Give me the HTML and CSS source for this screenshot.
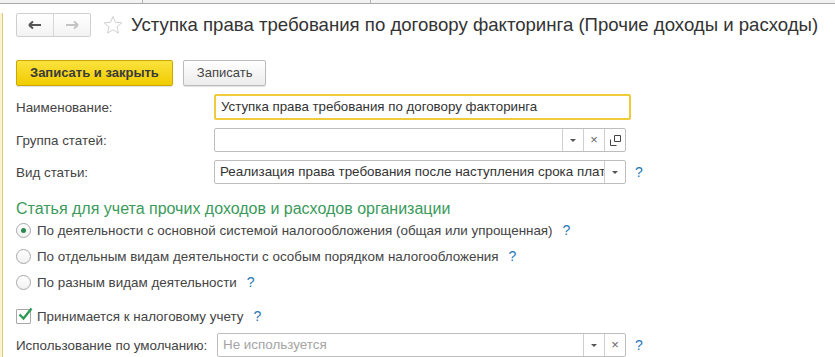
FILE: index.html
```html
<!DOCTYPE html>
<html lang="ru">
<head>
    <meta charset="utf-8">
    <title>Уступка права требования по договору факторинга</title>
    <link rel="stylesheet" href="styles.css">
</head>
<body>
    <div class="tabBar">
        <span class="tabSep tabSepA"></span>
        <span class="tabSep tabSepB"></span>
    </div>
    <div class="formWindow">
        <div class="headerRow">
            <div class="navGroup">
                <span class="navButton">
                    <svg width="14" height="10" viewBox="0 0 14 10"><path d="M1 5H13M1 5L5 1.5M1 5L5 8.5" stroke="#555" stroke-width="2" fill="none"/></svg>
                </span>
                <span class="navButton navRight">
                    <svg width="14" height="10" viewBox="0 0 14 10"><path d="M1 5H13M13 5L9 1.5M13 5L9 8.5" stroke="#c4c4c4" stroke-width="2" fill="none"/></svg>
                </span>
            </div>
            <svg class="star" width="20" height="20" viewBox="0 0 20 20"><path d="M10 1.5L12.5 7.3L18.8 7.8L14 11.9L15.5 18.1L10 14.8L4.5 18.1L6 11.9L1.2 7.8L7.5 7.3Z" fill="none" stroke="#d0d0d0" stroke-width="1"/></svg>
            <span class="title">Уступка права требования по договору факторинга (Прочие доходы и расходы)</span>
        </div>

        <div class="commandBar">
            <span class="button buttonDefault">Записать и закрыть</span>
            <span class="button">Записать</span>
        </div>

        <div class="fieldRow firstRow">
            <span class="label">Наименование:</span>
            <div class="field fieldFocus">Уступка права требования по договору факторинга</div>
        </div>
        <div class="fieldRow">
            <span class="label">Группа статей:</span>
            <div class="field fieldWide">
                <span class="fieldText"></span>
                <span class="fieldBtn"><i class="dropArrow"></i></span>
                <span class="fieldBtn">&#215;</span>
                <span class="fieldBtn">
                    <svg width="11" height="11" viewBox="0 0 11 11"><path d="M4.5 0.5H10.5V6.5H4.5Z M0.5 4.5V10.5H6.5" fill="none" stroke="#444" stroke-width="1"/></svg>
                </span>
            </div>
        </div>
        <div class="fieldRow">
            <span class="label">Вид статьи:</span>
            <div class="field fieldWide">
                <span class="fieldText">Реализация права требования после наступления срока платежа</span>
                <span class="fieldBtn"><i class="dropArrow"></i></span>
            </div>
            <span class="help">?</span>
        </div>

        <div class="groupTitle">Статья для учета прочих доходов и расходов организации</div>

        <div class="optionRow optionFirst">
            <span class="radio radioOn"></span>
            <span class="optionText">По деятельности с основной системой налогообложения (общая или упрощенная)</span>
            <span class="help">?</span>
        </div>
        <div class="optionRow">
            <span class="radio"></span>
            <span class="optionText">По отдельным видам деятельности с особым порядком налогообложения</span>
            <span class="help">?</span>
        </div>
        <div class="optionRow">
            <span class="radio"></span>
            <span class="optionText">По разным видам деятельности</span>
            <span class="help">?</span>
        </div>

        <div class="optionRow checkRow">
            <span class="checkbox">
                <svg width="15" height="14" viewBox="0 0 15 14"><path d="M1.5 7.5L5.5 11.5L13.5 1.5" fill="none" stroke="#2f9a55" stroke-width="2.4"/></svg>
            </span>
            <span class="optionText">Принимается к налоговому учету</span>
            <span class="help">?</span>
        </div>

        <div class="fieldRow lastRow">
            <span class="label labelLong">Использование по умолчанию:</span>
            <div class="field fieldLast">
                <span class="fieldText placeholder">Не используется</span>
                <span class="fieldBtn"><i class="dropArrow"></i></span>
                <span class="fieldBtn">&#215;</span>
            </div>
            <span class="help">?</span>
        </div>
    </div>
</body>
</html>
```

FILE: styles.css
```css
body
{
    margin: 0;
    background: #fff;
    font-family: "Liberation Sans", Arial, sans-serif;
    font-size: 13.4px;
    color: #444;
    overflow: hidden;
}
.tabBar
{
    position: relative;
    height: 3px;
    background: #f2f2f2;
    border-bottom: 1px solid #a9a9a9;
}
.tabSep
{
    position: absolute;
    top: 0;
    height: 3px;
    border-left: 1px solid #b5b5b5;
}
.tabSepA { left: 142px; }
.tabSepB { left: 370px; }

.formWindow
{
    margin-left: 2px;
    border-left: 1px solid #dccb78;
    box-shadow: -2px 0 0 #fbf3cf;
    padding-left: 13px;
    height: 353px;
}

.headerRow
{
    display: flex;
    align-items: center;
    margin-top: 9px;
    height: 24px;
}
.navGroup
{
    display: flex;
    border: 1px solid #cfcfcf;
    border-radius: 2px;
    height: 22px;
    background: linear-gradient(#fff, #f3f3f3);
}
.navButton
{
    width: 36px;
    display: flex;
    align-items: center;
    justify-content: center;
}
.navRight
{
    border-left: 1px solid #d8d8d8;
}
.star
{
    margin-left: 12px;
}
.title
{
    margin-left: 8px;
    font-size: 18.6px;
    color: #333;
    white-space: nowrap;
}

.commandBar
{
    display: flex;
    gap: 10px;
    margin-top: 23px;
}
.button
{
    height: 24px;
    line-height: 24px;
    padding: 0 13px;
    border: 1px solid #bcbcbc;
    border-radius: 2px;
    background: linear-gradient(#fff, #ececec);
    color: #444;
    font-size: 13px;
    box-shadow: 0 1px 1px rgba(0, 0, 0, 0.12);
}
.buttonDefault
{
    background: linear-gradient(#fbe23e, #f1cc00);
    border-color: #c9a900;
    font-weight: bold;
    color: #3a3a3a;
}

.fieldRow
{
    display: flex;
    align-items: center;
    margin-top: 8px;
    height: 24px;
}
.firstRow
{
    height: 26px;
}
.label
{
    width: 198px;
    flex: none;
}
.field
{
    display: flex;
    height: 22px;
    line-height: 22px;
    border: 1px solid #bdbdbd;
    border-radius: 2px;
    background: #fff;
    color: #333;
    box-sizing: content-box;
}
.fieldFocus
{
    width: 408px;
    border: 2px solid #efcb3a;
    padding-left: 5px;
    font-size: 13.3px;
}
.fieldWide
{
    width: 410px;
}
.fieldText
{
    flex: 1;
    padding-left: 5px;
    overflow: hidden;
    white-space: nowrap;
}
.fieldBtn
{
    width: 20px;
    border-left: 1px solid #cfcfcf;
    display: flex;
    align-items: center;
    justify-content: center;
    color: #666;
    font-size: 13px;
}
.dropArrow
{
    width: 0;
    height: 0;
    border-left: 3px solid transparent;
    border-right: 3px solid transparent;
    border-top: 3px solid #555;
}
.help
{
    margin-left: 9px;
    color: #2877b6;
    font-size: 14px;
}

.groupTitle
{
    margin-top: 15px;
    height: 20px;
    line-height: 20px;
    font-size: 16px;
    color: #3b9a5b;
}

.optionRow
{
    display: flex;
    align-items: center;
    height: 18px;
    margin-top: 8px;
}
.optionFirst
{
    margin-top: 2px;
}
.checkRow
{
    margin-top: 16px;
}
.radio
{
    width: 13px;
    height: 13px;
    border: 1px solid #a8a8a8;
    border-radius: 50%;
    background: linear-gradient(#fff, #f1f1f1);
    margin-right: 6px;
    display: flex;
    align-items: center;
    justify-content: center;
}
.radioOn::after
{
    content: "";
    width: 5px;
    height: 5px;
    border-radius: 50%;
    background: #2a8a4c;
}
.checkbox
{
    width: 13px;
    height: 13px;
    border: 1px solid #a8a8a8;
    border-radius: 1px;
    margin-right: 6px;
    display: flex;
    align-items: center;
    justify-content: center;
    overflow: visible;
}
.checkbox svg
{
    flex: none;
    margin-left: 3px;
    margin-top: -4px;
}
.optionText
{
    color: #444;
}
.optionRow .help
{
    margin-left: 10px;
}

.lastRow
{
    margin-top: 8px;
}
.labelLong
{
    width: 201px;
}
.fieldLast
{
    width: 407px;
}
.placeholder
{
    color: #a4a4a4;
}
```
